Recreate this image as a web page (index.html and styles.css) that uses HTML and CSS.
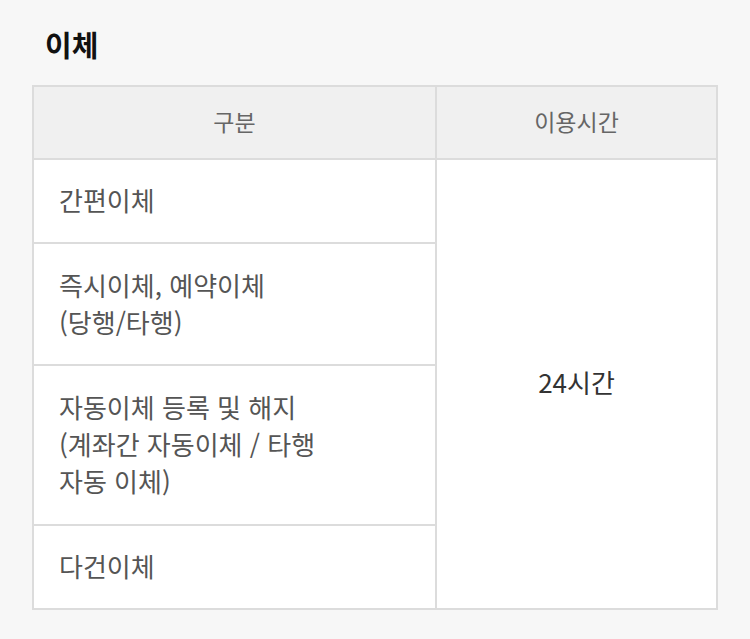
FILE: index.html
```html
<!DOCTYPE html>
<html lang="ko">
<head>
<meta charset="utf-8">
<link rel="stylesheet" href="styles.css">
</head>
<body>
<div class="page">
  <h2 class="title">이체</h2>
  <table class="info">
    <thead>
      <tr><th class="col-a">구분</th><th class="col-b">이용시간</th></tr>
    </thead>
    <tbody>
      <tr><td>간편이체</td><td class="time" rowspan="4">24시간</td></tr>
      <tr><td class="multi">즉시이체, 예약이체<br>(당행/타행)</td></tr>
      <tr><td class="multi tall">자동이체 등록 및 해지<br>(계좌간 자동이체 / 타행<br>자동 이체)</td></tr>
      <tr><td>다건이체</td></tr>
    </tbody>
  </table>
</div>
</body>
</html>
```

FILE: styles.css
```css
html, body {
  margin: 0;
  padding: 0;
  background: #f7f7f7;
}
.page {
  padding: 24px 32px 0 32px;
  font-family: "Noto Sans CJK KR", "Noto Sans", sans-serif;
}
.title {
  margin: 0 0 21px 13px;
  font-size: 29px;
  line-height: 40px;
  font-weight: 700;
  color: #111;
}
.info {
  width: 686px;
  border-collapse: collapse;
  background: #fff;
  table-layout: fixed;
}
.info th, .info td {
  border: 2px solid #dcdcdc;
}
.info th {
  background: #f0f0f0;
  font-weight: 400;
  font-size: 23px;
  color: #666;
  line-height: 38px;
  padding: 15px 0 18px;
  text-align: center;
}
.col-a { width: 401px; }
.info td {
  font-size: 26px;
  line-height: 37px;
  color: #555;
  padding: 21px 24px 24px 25px;
  text-align: left;
  vertical-align: middle;
}
.info td.multi {
  padding-top: 22px;
  padding-bottom: 24px;
}
.info td.tall {
  padding-bottom: 25px;
}
.info td.time {
  text-align: center;
  color: #333;
  padding: 0 0 6px;
}
```
